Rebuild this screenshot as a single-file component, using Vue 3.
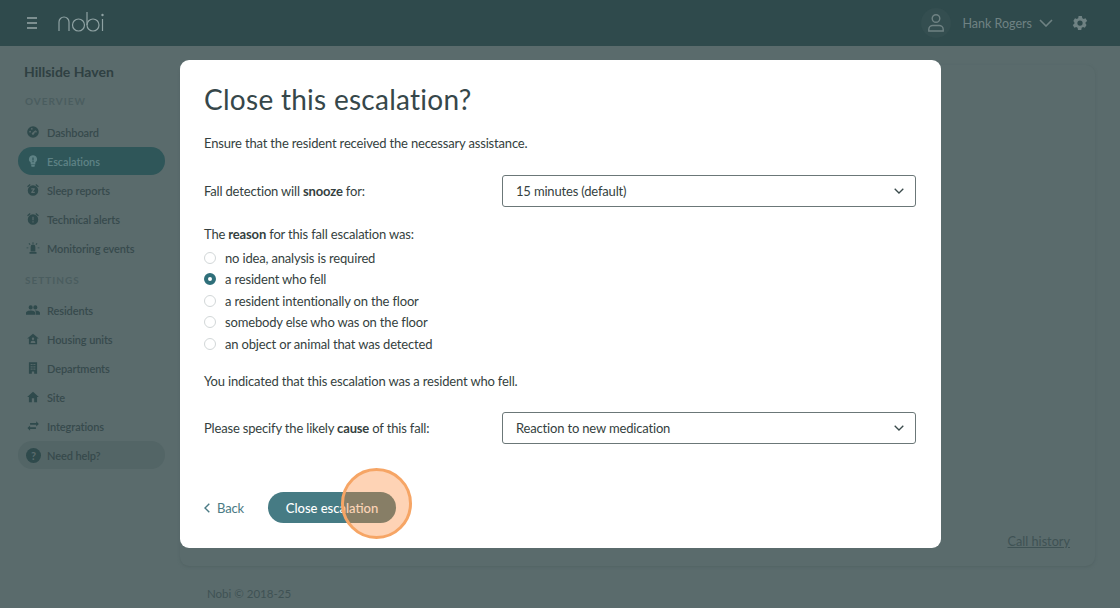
<script setup>
const nav1 = [
  { label: 'Dashboard', icon: 'dash' },
  { label: 'Escalations', icon: 'bulb', active: true },
  { label: 'Sleep reports', icon: 'alarmz' },
  { label: 'Technical alerts', icon: 'alarm' },
  { label: 'Monitoring events', icon: 'siren' },
]
const nav2 = [
  { label: 'Residents', icon: 'people' },
  { label: 'Housing units', icon: 'unit' },
  { label: 'Departments', icon: 'dept' },
  { label: 'Site', icon: 'home' },
  { label: 'Integrations', icon: 'swap' },
]
const paths = {
  dash: 'M12 2a10 10 0 1 0 0 20 10 10 0 0 0 0-20zM7 13a1.5 1.5 0 1 1 0-3 1.5 1.5 0 0 1 0 3zm3-5a1.5 1.5 0 1 1 0-3 1.5 1.5 0 0 1 0 3zm3 8.5a2 2 0 0 1-2.6-3L17 8l-3 7.5a2 2 0 0 1-1 1zM17 13a1.5 1.5 0 1 1 0-3 1.5 1.5 0 0 1 0 3z',
  bulb: 'M12 2a7 7 0 0 0-4 12.7V17a1 1 0 0 0 1 1h6a1 1 0 0 0 1-1v-2.3A7 7 0 0 0 12 2zm-3 17h6v1a2 2 0 0 1-2 2h-2a2 2 0 0 1-2-2v-1zm2-13h2v5h-2V6zm0 6h2v2h-2v-2z',
  alarmz: 'M22 5.7 17.4 1.9l-1.3 1.5 4.6 3.9L22 5.7zM7.9 3.4 6.6 1.9 2 5.7l1.3 1.5 4.6-3.8zM12 4a9 9 0 1 0 0 18 9 9 0 0 0 0-18zm3 13H9v-1.6L12.2 11H9V9h6v1.6L11.8 15H15v2z',
  alarm: 'M22 5.7 17.4 1.9l-1.3 1.5 4.6 3.9L22 5.7zM7.9 3.4 6.6 1.9 2 5.7l1.3 1.5 4.6-3.8zM12 4a9 9 0 1 0 0 18 9 9 0 0 0 0-18zm1 14h-2v-2h2v2zm0-4h-2V8h2v6z',
  siren: 'M6 19h12v3H6zM8 10a4 4 0 0 1 8 0v8H8zM1 11h3v1.6H1zM20 11h3v1.6h-3zM11.2 2h1.6v3h-1.6zM4.4 4.6l1.2-1.1 2.1 2.1-1.1 1.2zM16.3 5.6l2.1-2.1 1.2 1.1-2.2 2.2z',
  people: 'M16 11a3.5 3.5 0 1 0 0-7 3.5 3.5 0 0 0 0 7zm-8 0a3.5 3.5 0 1 0 0-7 3.5 3.5 0 0 0 0 7zm0 2c-2.7 0-8 1.3-8 4v3h16v-3c0-2.7-5.3-4-8-4zm8 0h-1c1.400 1 2 2.300 2 4v3h7v-3c0-2.700-5.300-4-8-4z',
  unit: 'M12 3 2 11h3v10h14V11h3L12 3zm0 6.500a2 2 0 1 1 0 4 2 2 0 0 1 0-4zM8 19v-1.500c0-1.700 2.700-2.500 4-2.500s4 .8 4 2.500V19H8z',
  dept: 'M5 2h14v20h-5v-4h-4v4H5V2zm3 3v2h2V5H8zm3 0v2h2V5h-2zm3 0v2h2V5h-2zM8 9v2h2V9H8zm3 0v2h2V9h-2zm3 0v2h2V9h-2zM8 13v2h2v-2H8zm3 0v2h2v-2h-2zm3 0v2h2v-2h-2z',
  home: 'M10 21v-7h4v7h5v-9h3L12 3 2 12h3v9h5z',
  swap: 'M7 11 2.500 15.500 7 20v-3h10v-2.800H7V11zM22 8.500 17.500 4v3H7v2.800h10.500V13L22 8.500z',
}
const reasons = [
  'no idea, analysis is required',
  'a resident who fell',
  'a resident intentionally on the floor',
  'somebody else who was on the floor',
  'an object or animal that was detected',
]
</script>

<template>
  <div class="page">
    <header class="topbar">
      <svg class="burger" width="14" height="12" viewBox="0 0 14 12"><path d="M2 1h10M2 6h10M2 11h10" stroke="#7d8f90" stroke-width="1.800" fill="none" /></svg>
      <svg class="logo" width="46" height="22" viewBox="0 0 46 22" fill="none" stroke="#8fa2a3" stroke-width="1.200">
        <path d="M1 20V11a5 5 0 0 1 10 0v9" />
        <circle cx="20.500" cy="14" r="6" />
        <path d="M29 1v13" /><circle cx="35" cy="14" r="6" />
        <path d="M44.500 8v12" /><circle cx="44.500" cy="4" r=".6" />
      </svg>
      <div class="spacer"></div>
      <div class="avatar">
        <svg width="20" height="20" viewBox="0 0 20 20" fill="none" stroke="#6f8283" stroke-width="1.400"><circle cx="10" cy="5.500" r="3.800" /><path d="M2.800 18v-1.500c0-2.500 2-4 4-4h6.400c2 0 4 1.500 4 4V18z" /></svg>
      </div>
      <span class="user">Hank Rogers</span>
      <svg class="chev" width="14" height="8" viewBox="0 0 14 8" fill="none" stroke="#6f8283" stroke-width="1.600"><path d="M1 1l6 6 6-6" /></svg>
      <svg class="gear" width="18" height="18" viewBox="0 0 24 24" fill="#6f8283"><path d="M19.400 13a7.500 7.500 0 0 0 0-2l2.200-1.700-2.200-3.700-2.600 1a7.600 7.600 0 0 0-1.700-1L14.500 2.800h-4.400l-.5 2.800a7.600 7.600 0 0 0-1.700 1l-2.600-1-2.200 3.700L4.500 11a7.500 7.500 0 0 0 0 2l-2.200 1.700 2.200 3.700 2.600-1a7.600 7.600 0 0 0 1.700 1l.5 2.800h4.400l.5-2.800a7.600 7.600 0 0 0 1.700-1l2.600 1 2.200-3.700L19.400 13zM12 15.500a3.500 3.500 0 1 1 0-7 3.500 3.500 0 0 1 0 7z" /></svg>
    </header>

    <div class="body">
      <aside class="side">
        <h2 class="site">Hillside Haven</h2>
        <div class="section">OVERVIEW</div>
        <div v-for="n in nav1" :key="n.label" class="item" :class="{ active: n.active }">
          <svg width="14" height="14" viewBox="0 0 24 24" fill="#2f4a4c"><path :d="paths[n.icon]" /></svg>
          <span>{{ n.label }}</span>
        </div>
        <div class="section second">SETTINGS</div>
        <div v-for="n in nav2" :key="n.label" class="item">
          <svg width="14" height="14" viewBox="0 0 24 24" fill="#2f4a4c"><path :d="paths[n.icon]" /></svg>
          <span>{{ n.label }}</span>
        </div>
        <div class="item help">
          <span class="q">?</span>
          <span>Need help?</span>
        </div>
      </aside>
      <main class="main">
        <div class="card"><a class="history">Call history</a></div>
        <div class="foot">Nobi © 2018-25</div>
      </main>
    </div>

    <section class="modal">
      <h1>Close this escalation?</h1>
      <p class="intro">Ensure that the resident received the necessary assistance.</p>
      <div class="row first">
        <label>Fall detection will <b>snooze</b> for:</label>
        <div class="select">15 minutes (default)
          <svg width="10" height="6" viewBox="0 0 10 6" fill="none" stroke="#3a4a4b" stroke-width="1.300"><path d="M.7.7 5 5 9.300.7" /></svg>
        </div>
      </div>
      <p class="legend">The <b>reason</b> for this fall escalation was:</p>
      <div class="radios">
        <div v-for="(r, i) in reasons" :key="r" class="radio">
          <span class="dot" :class="{ on: i === 1 }"></span>{{ r }}
        </div>
      </div>
      <p class="note">You indicated that this escalation was a resident who fell.</p>
      <div class="row">
        <label>Please specify the likely <b>cause</b> of this fall:</label>
        <div class="select">Reaction to new medication
          <svg width="10" height="6" viewBox="0 0 10 6" fill="none" stroke="#3a4a4b" stroke-width="1.300"><path d="M.7.7 5 5 9.300.7" /></svg>
        </div>
      </div>
      <div class="actions">
        <a class="back">
          <svg width="6" height="10" viewBox="0 0 6 10" fill="none" stroke="#4a7a84" stroke-width="1.400"><path d="M5.300.7 1 5l4.300 4.300" /></svg>
          Back
        </a>
        <button class="close">Close escalation</button>
      </div>
    </section>
    <div class="spot"></div>
  </div>
</template>

<style>
html, body { margin: 0; background: #5a6b6c; }
</style>

<style scoped>
.page {
  position: relative;
  width: 1120px;
  height: 608px;
  overflow: hidden;
  background: #5a6b6c;
  font-family: Lato, Roboto, sans-serif;
  font-size: 13px;
  letter-spacing: -.17px;
  color: #333f40;
}
.topbar {
  height: 46px;
  background: #2f4a4c;
  display: flex;
  align-items: center;
  padding: 0 31px 0 25px;
  box-sizing: border-box;
}
.burger { margin-right: 19px; }
.logo { margin-top: -2px; }
.spacer { flex: 1; }
.avatar {
  width: 30px;
  height: 30px;
  border-radius: 50%;
  background: #344e50;
  display: flex;
  align-items: center;
  justify-content: center;
  margin-right: 12px;
}
.user { color: #6f8283; font-size: 12.500px; letter-spacing: 0; margin-right: 7px; }
.chev { margin-right: 18px; }
.body { display: flex; height: 562px; }
.side { width: 180px; flex: none; padding: 18px 15px 0 18px; box-sizing: border-box; }
.site { margin: 0 0 0 6px; font-size: 14px; line-height: 16px; font-weight: 700; letter-spacing: 0; color: #2f4042; }
.section {
  margin: 15px 0 10px 7px;
  font-size: 10px;
  line-height: 13px;
  letter-spacing: 1px;
  color: #4a5d5f;
  font-weight: 700;
}
.section.second { margin-top: 12px; margin-bottom: 9px; }
.item {
  height: 28px;
  margin-bottom: 1px;
  border-radius: 14px;
  display: flex;
  align-items: center;
  padding-left: 8px;
  gap: 7px;
  font-size: 11px;
  letter-spacing: -.1px;
  font-weight: 600;
  color: #374a4c;
}
.item svg { flex: none; }
.item.active { background: #2f5659; color: #5e8285; }
.item.active svg { fill: #5e8285; }
.item.help { background: #536566; gap: 6px; }
.q {
  width: 15px;
  height: 15px;
  border-radius: 50%;
  background: #2f4a4c;
  color: #5a6b6c;
  font-size: 11px;
  font-weight: 700;
  display: flex;
  align-items: center;
  justify-content: center;
}
.main { flex: 1; padding: 19px 25px 0 0; box-sizing: border-box; }
.card {
  height: 501px;
  border-radius: 9px;
  background: #5a6b6c;
  box-shadow: 0 1px 3px #526364;
  display: flex;
  justify-content: flex-end;
  align-items: flex-end;
  padding: 0 25px 17px 0;
  box-sizing: border-box;
}
.history { color: #3f5254; font-size: 12.700px; letter-spacing: 0; text-decoration: underline; }
.foot { margin: 21px 0 0 27px; font-size: 11.500px; letter-spacing: 0; color: #3f5254; }
.modal {
  position: absolute;
  left: 180px;
  top: 60px;
  width: 761px;
  height: 488px;
  box-sizing: border-box;
  padding: 22px 25px 0 24px;
  background: #fff;
  border-radius: 9px;
  color: #353f40;
}
h1 { margin: 0; font-size: 28px; line-height: 34px; font-weight: 400; letter-spacing: .27px; color: #36474a; }
.intro { margin: 18px 0 0; line-height: 18px; }
.row { display: flex; align-items: center; justify-content: space-between; }
.row.first { margin-top: 23px; }
.select {
  width: 414px;
  height: 32px;
  box-sizing: border-box;
  border: 1px solid #6b7778;
  border-radius: 3px;
  padding: 0 11px 0 13px;
  display: flex;
  align-items: center;
  justify-content: space-between;
  background: #fff;
}
b { font-weight: 700; }
.legend { margin: 18px 0 0; line-height: 18px; }
.radios { margin-top: 4px; }
.radio { height: 21.500px; display: flex; align-items: center; gap: 9px; }
.dot {
  width: 10px;
  height: 10px;
  border-radius: 50%;
  border: 1px solid #d2d7d8;
  background: #fff;
}
.dot.on { width: 4px; height: 4px; border: 4px solid #2f6f7a; }
.note { margin: 17.500px 0 22px; line-height: 18px; }
.actions { display: flex; align-items: center; margin-top: 48px; }
.back { display: flex; align-items: center; gap: 7px; color: #4a7a84; width: 64px; }
.close {
  width: 128px;
  height: 31px;
  border: 0;
  border-radius: 16px;
  background: #467b84;
  color: #fff;
  font: 500 13px Lato, Roboto, sans-serif;
  letter-spacing: 0;
  padding: 0;
}
.spot {
  position: absolute;
  left: 341px;
  top: 468px;
  width: 71px;
  height: 71px;
  box-sizing: border-box;
  border-radius: 50%;
  background: rgba(252, 134, 50, .36);
  border: 3px solid #f6a565;
}
</style>
